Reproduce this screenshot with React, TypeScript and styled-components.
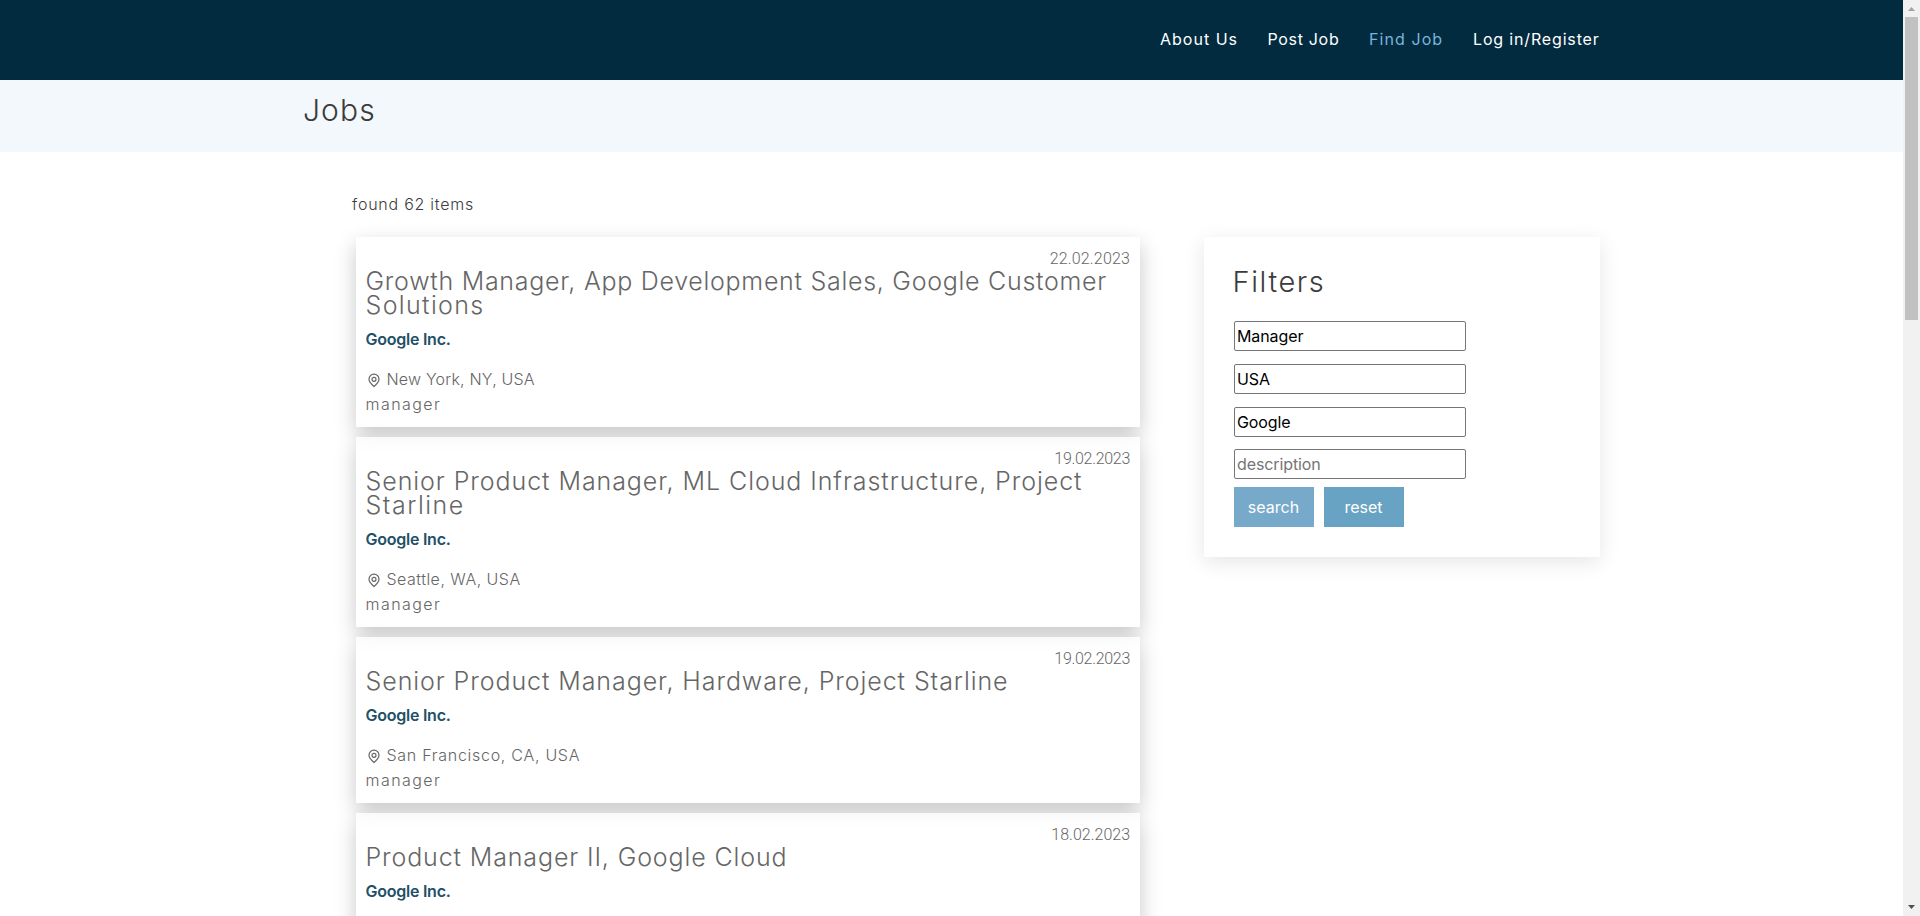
import React from "react";
import styled, { createGlobalStyle } from "styled-components";

const GlobalStyle = createGlobalStyle`
  * { box-sizing: border-box; }
  body { margin: 0; overflow: hidden; background: #fff; color: #3c3c3c; font-family: Inter, "Liberation Sans", sans-serif; font-size: 16px; }
  h1, h2, h3, p { margin: 0; }
`;

const Window = styled.div`
  display: flex;
  height: 916px;
  overflow: hidden;
`;

const Page = styled.div`
  flex: 1;
  min-width: 0;
  height: 916px;
  overflow: hidden;
`;

const Spaced = styled.span<{ $track: number }>`
  letter-spacing: ${(p) => p.$track}px;
`;

const Header = styled.header`
  height: 80px;
  background: #022b3f;
`;

const Container = styled.div`
  width: 1297px;
  margin: 0 auto;
`;

const Nav = styled.nav`
  display: flex;
  justify-content: flex-end;
  height: 78px;
  align-items: center;
`;

const NavLink = styled.a<{ $active?: boolean; $width: number }>`
  width: ${(p) => p.$width}px;
  white-space: nowrap;
  color: ${(p) => (p.$active ? "#79b4dc" : "#fff")};
  font-weight: 400;
`;

const Band = styled.div`
  height: 72px;
  background: #f2f8fb;
`;

const PageTitle = styled.h1`
  padding-top: 12px;
  font-size: 30px;
  line-height: 36px;
  font-weight: 300;
`;

const Main = styled(Container)`
  display: grid;
  grid-template-columns: 784px 396px;
  column-gap: 64px;
  align-items: start;
  padding: 41px 0 0 53px;
`;

const Found = styled.p`
  grid-column: 1 / -1;
  margin: 0 0 22px -4px;
  line-height: 22px;
  font-weight: 300;
`;

const List = styled.div`
  display: flex;
  flex-direction: column;
  gap: 10px;
`;

const Card = styled.article`
  padding: 10px 10px 10px 9.5px;
  height: max-content;
  background: rgba(255, 255, 255, 0.75);
  color: #666;
  font-weight: 300;
  box-shadow: 0 8px 20px rgba(0, 0, 0, 0.22);
`;

const DateLine = styled.p`
  height: 22px;
  line-height: 24px;
  text-align: right;
  font-family: Roboto, sans-serif;
`;

const JobTitle = styled.h2`
  font-size: 25px;
  line-height: 24px;
  font-weight: 300;
  white-space: nowrap;
`;

const Company = styled.p`
  margin-top: 9px;
  line-height: 26px;
  font-weight: 600;
  color: #225066;
`;

const Place = styled.p`
  display: flex;
  align-items: center;
  margin-top: 15px;
  height: 25px;
  line-height: 25px;
`;

const Pin = styled.svg`
  width: 16px;
  height: 16px;
  margin-right: 5px;
`;

const Category = styled.p`
  height: 25px;
  line-height: 25px;
`;

const Filters = styled.aside`
  height: 320px;
  padding: 30px;
  background: #fff;
  box-shadow: 0 5px 20px rgba(0, 0, 0, 0.1);
`;

const FilterTitle = styled.h2`
  height: 54px;
  margin-left: -1.5px;
  font-size: 29px;
  line-height: 30px;
  font-weight: 300;
`;

const Fields = styled.form`
  display: flex;
  flex-direction: column;
`;

const Field = styled.input<{ $gap: number }>`
  width: 232px;
  height: 30px;
  margin-bottom: ${(p) => p.$gap}px;
  padding: 1px 2px;
  border: 1px solid #767676;
  border-radius: 2px;
  background: #fff;
  color: #000;
  font: 400 16px Inter, sans-serif;
  letter-spacing: -0.1px;
  &::placeholder { color: #757575; opacity: 1; }
`;

const Actions = styled.div`
  display: flex;
  gap: 10px;
`;

const Button = styled.button<{ $tone: string }>`
  width: 80px;
  height: 40px;
  padding: 0 1px 0 0;
  border: 0;
  background: ${(p) => p.$tone};
  color: #fff;
  font: 400 16px Inter, sans-serif;
`;

const Scrollbar = styled.div`
  display: flex;
  flex-direction: column;
  align-items: center;
  width: 17px;
  height: 916px;
  background: #f1f1f1;
`;

const Arrow = styled.svg`
  width: 17px;
  height: 17px;
`;

const Thumb = styled.div`
  width: 13px;
  height: 303px;
  margin-bottom: auto;
  background: #c1c1c1;
`;

type Text = [string, number];
type Job = { date: Text; title: Text[]; place: Text };

const jobs: Job[] = [
  { date: ["22.02.2023", 0.16], title: [["Growth Manager, App Development Sales, Google Customer", 0.72], ["Solutions", 1.35]], place: ["New York, NY, USA", 0.2] },
  { date: ["19.02.2023", -0.3], title: [["Senior Product Manager, ML Cloud Infrastructure, Project", 0.93], ["Starline", 1.5]], place: ["Seattle, WA, USA", 0.48] },
  { date: ["19.02.2023", -0.3], title: [["Senior Product Manager, Hardware, Project Starline", 0.92]], place: ["San Francisco, CA, USA", 0.72] },
  { date: ["18.02.2023", 0], title: [["Product Manager II, Google Cloud", 0.87]], place: ["New York, NY, USA", 0.2] },
];

const links = [
  { label: "About Us", track: 1, width: 107.5 },
  { label: "Post Job", track: 0.68, width: 101.5 },
  { label: "Find Job", track: 1.08, width: 104, active: true },
  { label: "Log in/Register", track: 0.84, width: 127 },
];

export default function App() {
  return (
    <Window>
      <GlobalStyle />
      <Page>
        <Header>
          <Container>
            <Nav>
              {links.map((l) => (
                <NavLink key={l.label} $active={l.active} $width={l.width}>
                  <Spaced $track={l.track}>{l.label}</Spaced>
                </NavLink>
              ))}
            </Nav>
          </Container>
        </Header>
        <Band>
          <Container>
            <PageTitle><Spaced $track={1.1}>Jobs</Spaced></PageTitle>
          </Container>
        </Band>
        <Main>
          <Found><Spaced $track={0.76}>found 62 items</Spaced></Found>
          <List>
            {jobs.map((job, i) => (
              <Card key={i}>
                <DateLine><Spaced $track={job.date[1]}>{job.date[0]}</Spaced></DateLine>
                <JobTitle>
                  {job.title.map(([text, track], n) => (
                    <React.Fragment key={text}>
                      {n > 0 && <br />}
                      <Spaced $track={track}>{text}</Spaced>
                    </React.Fragment>
                  ))}
                </JobTitle>
                <Company><Spaced $track={-0.25}>Google Inc.</Spaced></Company>
                <Place>
                  <Pin viewBox="0 0 16 16" fill="none" stroke="#666" strokeWidth="1.2">
                    <path d="M8 14.5C5.5 12.3 3 9.8 3 7.2a5 5 0 0 1 10 0c0 2.6-2.500 5.100-5 7.300z" />
                    <circle cx="8" cy="7.300" r="2" />
                  </Pin>
                  <Spaced $track={job.place[1]}>{job.place[0]}</Spaced>
                </Place>
                <Category><Spaced $track={1.45}>manager</Spaced></Category>
              </Card>
            ))}
          </List>
          <Filters>
            <FilterTitle><Spaced $track={1.6}>Filters</Spaced></FilterTitle>
            <Fields>
              <Field $gap={13} defaultValue="Manager" />
              <Field $gap={13} defaultValue="USA" />
              <Field $gap={12} defaultValue="Google" />
              <Field $gap={8} placeholder="description" />
              <Actions>
                <Button type="button" $tone="#77aaca">search</Button>
                <Button type="button" $tone="#68a3c4">reset</Button>
              </Actions>
            </Fields>
          </Filters>
        </Main>
      </Page>
      <Scrollbar>
        <Arrow viewBox="0 0 17 17"><path d="M5 11h7L8.500 7z" fill="#a3a3a3" /></Arrow>
        <Thumb />
        <Arrow viewBox="0 0 17 17"><path d="M5 6h7L8.500 10z" fill="#505050" /></Arrow>
      </Scrollbar>
    </Window>
  );
}
